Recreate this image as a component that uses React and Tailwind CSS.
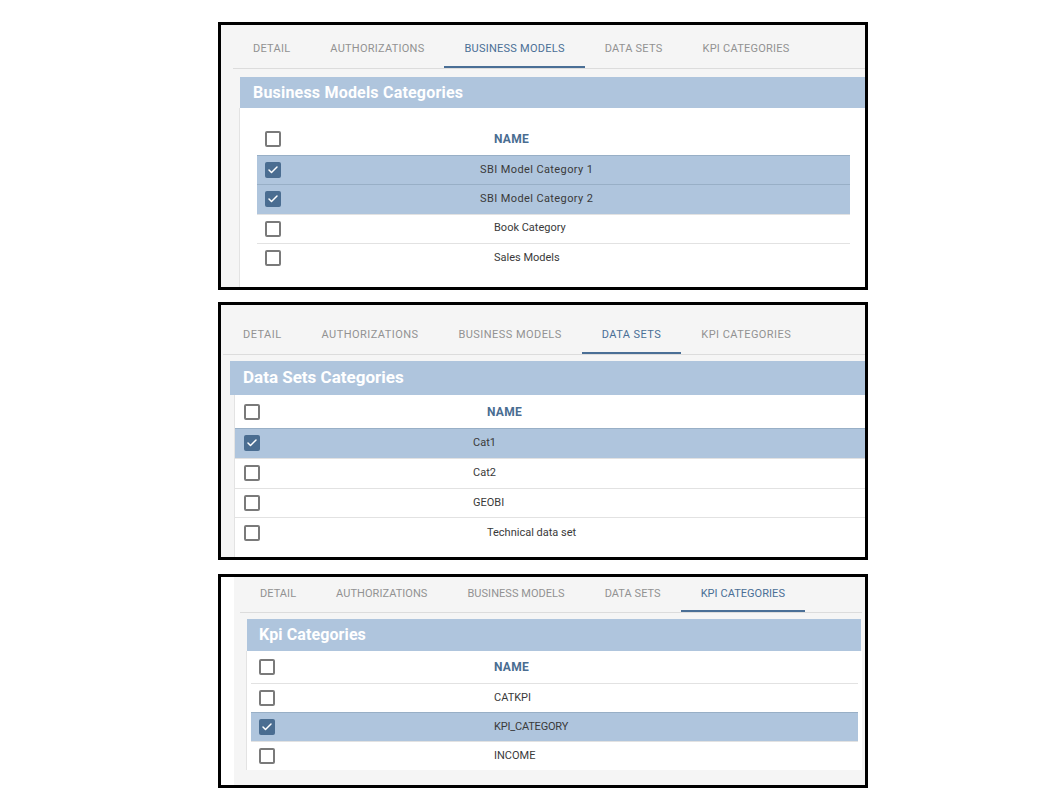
import { Check } from "lucide-react";

const TABS = ["Detail", "Authorizations", "Business Models", "Data Sets", "Kpi Categories"];

const panels = [
  {
    title: "Business Models Categories",
    titleText: "text-[16px] tracking-[0.2px]",
    active: "Business Models",
    box: "h-[268px]",
    page: "ml-0",
    tabBar: "ml-[12px] h-[44px]",
    tab: "pt-[7px] px-5 tracking-[0.25px]",
    gap: "h-[8px]",
    band: "ml-[19px] h-[31px] pl-[13px]",
    body: "ml-[18px]",
    table: "ml-[17px] mr-[15px]",
    headRow: "h-[47px] pt-[15px]",
    cols: "grid-cols-[237px_1fr]",
    check: "pl-[8px]",
    rowH: "h-[29.3px]",
    rows: [
      { name: "SBI Model Category 1", on: true, shift: "-ml-[14px] tracking-[0.4px]" },
      { name: "SBI Model Category 2", on: true, shift: "-ml-[14px] tracking-[0.4px]" },
      { name: "Book Category", on: false, shift: "" },
      { name: "Sales Models", on: false, shift: "" },
    ],
  },
  {
    title: "Data Sets Categories",
    titleText: "text-[17px] tracking-[0px]",
    active: "Data Sets",
    box: "h-[258px] mt-[12px]",
    page: "ml-0",
    tabBar: "ml-[2px] h-[50px]",
    tab: "pt-[14px] px-5 tracking-[0.45px]",
    gap: "h-[6px]",
    band: "ml-[9px] h-[34px] pl-[13px]",
    body: "ml-[13px]",
    table: "ml-0 mr-0",
    headRow: "h-[33px] pt-0",
    cols: "grid-cols-[252px_1fr]",
    check: "pl-[9px]",
    rowH: "h-[29.8px]",
    rows: [
      { name: "Cat1", on: true, shift: "-ml-[14px]" },
      { name: "Cat2", on: false, shift: "-ml-[14px]" },
      { name: "GEOBI", on: false, shift: "-ml-[14px]" },
      { name: "Technical data set", on: false, shift: "" },
    ],
  },
  {
    title: "Kpi Categories",
    titleText: "text-[16px] tracking-[0.1px]",
    active: "Kpi Categories",
    box: "h-[214px] mt-[14px]",
    page: "ml-[13px]",
    tabBar: "ml-[6px] mr-[3px] h-[36px]",
    tab: "pt-[2px] px-5 tracking-[0.05px]",
    gap: "h-[6px]",
    band: "ml-[13px] mr-[4px] h-[32px] pl-[12px]",
    body: "ml-[12px] mr-[3px] mb-[16px]",
    table: "ml-[4px] mr-[4px]",
    headRow: "h-[32px] pt-0",
    cols: "grid-cols-[243px_1fr]",
    check: "pl-[8px]",
    rowH: "h-[29px]",
    rows: [
      { name: "CATKPI", on: false, shift: "" },
      { name: "KPI_CATEGORY", on: true, shift: "tracking-[-0.2px]" },
      { name: "INCOME", on: false, shift: "" },
    ],
  },
];

function Box({ on }) {
  if (on) {
    return (
      <span className="flex items-center justify-center w-[16px] h-[16px] rounded-[2px] bg-[#4a6d91]">
        <Check size={12} strokeWidth={3} className="text-white" />
      </span>
    );
  }
  return <span className="block w-[16px] h-[16px] rounded-[2px] border-2 border-[#7a7a7a] bg-white" />;
}

function Panel({ p }) {
  return (
    <div className={`w-[650px] border-[3px] border-black bg-white overflow-hidden ${p.box}`}>
      <div className={`h-full flex flex-col bg-[#f5f5f5] ${p.page}`}>
        {/* tabs */}
        <div className={`flex items-stretch border-b border-[#dcdcdc] shrink-0 ${p.tabBar}`}>
          {TABS.map((t) => {
            const on = t === p.active;
            return (
              <div
                key={t}
                className={`flex items-center text-[11px] uppercase border-b-2 ${p.tab} ${
                  on ? "text-[#4a6f96] border-[#4a6f96]" : "text-[#929292] border-transparent"
                }`}
              >
                {t}
              </div>
            );
          })}
        </div>
        <div className={`shrink-0 ${p.gap}`} />

        {/* category card */}
        <div className={`flex items-center bg-[#afc5dd] text-white font-bold shrink-0 ${p.band} ${p.titleText}`}>
          {p.title}
        </div>
        <div className={`flex-1 bg-white border-l border-[#e3e3e3] ${p.body}`}>
          <div className={p.table}>
            <div className={`grid items-center ${p.cols} ${p.headRow}`}>
              <div className={p.check}>
                <Box on={false} />
              </div>
              <div className="text-[12px] font-bold text-[#4a6d91] tracking-[0.3px]">NAME</div>
            </div>
            {p.rows.map((r) => (
              <div
                key={r.name}
                className={`grid items-center border-t ${p.cols} ${p.rowH} ${
                  r.on ? "bg-[#afc5dd] border-[#98afc6]" : "bg-white border-[#e2e2e2]"
                }`}
              >
                <div className={p.check}>
                  <Box on={r.on} />
                </div>
                <div className={`text-[11px] text-[#3a3a3a] ${r.shift}`}>{r.name}</div>
              </div>
            ))}
          </div>
        </div>
      </div>
    </div>
  );
}

export default function App() {
  return (
    <div className="w-[1058px] h-[794px] bg-white pl-[218px] pt-[22px] font-['Roboto',sans-serif]">
      {panels.map((p) => (
        <Panel key={p.title} p={p} />
      ))}
    </div>
  );
}
